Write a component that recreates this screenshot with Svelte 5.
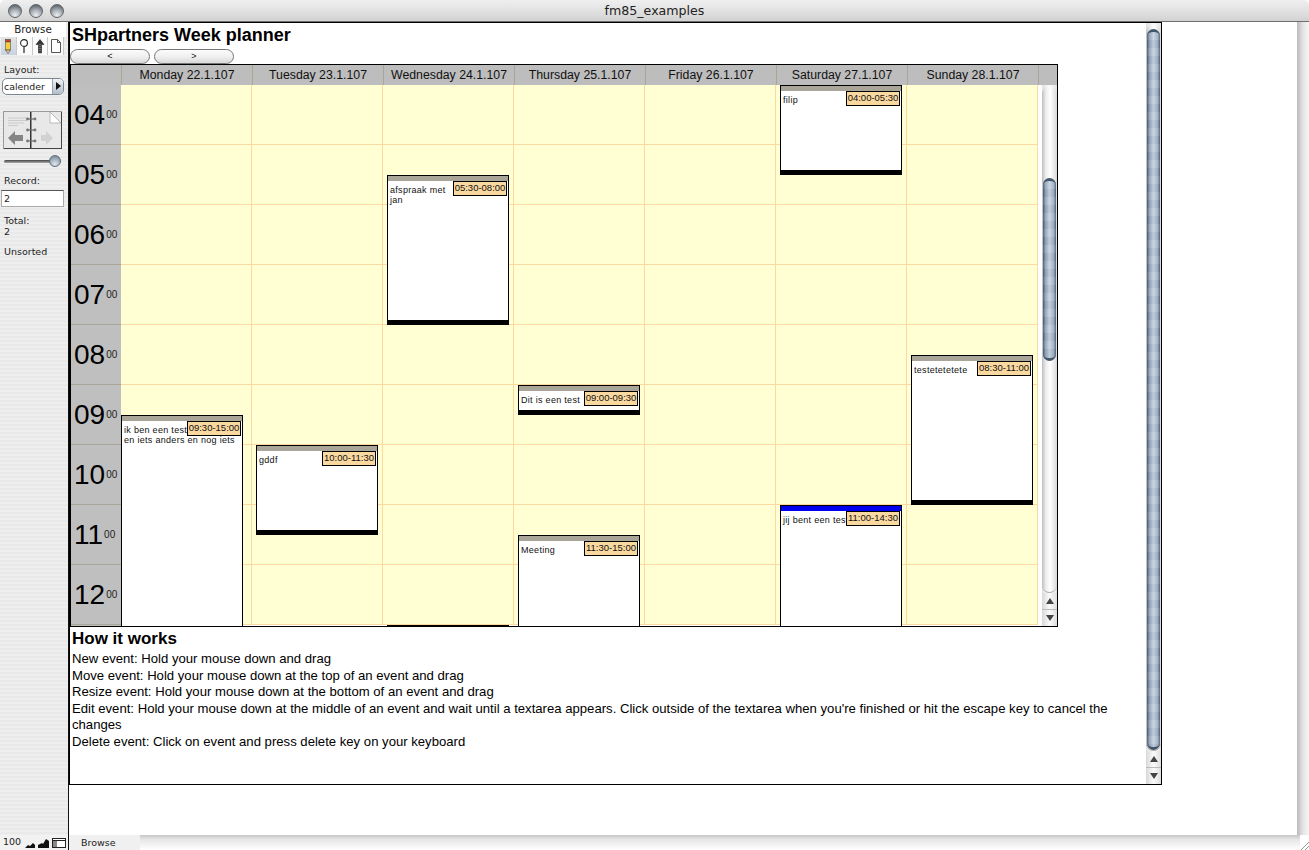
<script>
  const days = [
    "Monday 22.1.107",
    "Tuesday 23.1.107",
    "Wednesday 24.1.107",
    "Thursday 25.1.107",
    "Friday 26.1.107",
    "Saturday 27.1.107",
    "Sunday 28.1.107",
  ];
  const hours = ["04", "05", "06", "07", "08", "09", "10", "11", "12"];

  const hourHeight = 60;
  const dayWidth = 131;

  // day is the column, start and end are in hours
  const events = [
    { day: 0, start: 9.5, end: 15, time: "09:30-15:00", lines: ["ik ben een test", "en iets anders en nog iets"], flush: true },
    { day: 1, start: 10, end: 11.5, time: "10:00-11:30", lines: ["gddf"] },
    { day: 2, start: 5.5, end: 8, time: "05:30-08:00", lines: ["afspraak met", "jan"] },
    { day: 2, start: 13, end: 15, time: "", lines: [], bar: "#000" },
    { day: 3, start: 9, end: 9.5, time: "09:00-09:30", lines: ["Dit is een test"] },
    { day: 3, start: 11.5, end: 15, time: "11:30-15:00", lines: ["Meeting"] },
    { day: 5, start: 4, end: 5.5, time: "04:00-05:30", lines: ["filip"] },
    { day: 5, start: 11, end: 14.5, time: "11:00-14:30", lines: ["jij bent een test"], bar: "#0000f0" },
    { day: 6, start: 8.5, end: 11, time: "08:30-11:00", lines: ["testetetetete"] },
  ];

  const help = [
    "New event: Hold your mouse down and drag",
    "Move event: Hold your mouse down at the top of an event and drag",
    "Resize event: Hold your mouse down at the bottom of an event and drag",
    "Edit event: Hold your mouse down at the middle of an event and wait until a textarea appears. Click outside of the textarea when you're finished or hit the escape key to cancel the changes",
    "Delete event: Click on event and press delete key on your keyboard",
  ];
</script>

{#snippet scrollbar(before, thumb)}
  <div class="scrollbar">
    <div class="track">
      <div class="thumb" style="margin-top: {before}px; height: {thumb}px"></div>
    </div>
    <div class="arrow up"><span></span></div>
    <div class="arrow down"><span></span></div>
  </div>
{/snippet}

<div class="window">
  <header class="titlebar">
    <div class="lights">
      <span></span>
      <span></span>
      <span></span>
    </div>
    <div class="title">fm85_examples</div>
  </header>

  <div class="body">
    <aside class="sidebar">
      <div class="mode">Browse</div>
      <div class="tools">
        <div class="tool active">
          <svg width="8" height="15" viewBox="0 0 8 15">
            <rect x="1.5" y="0.5" width="5" height="2.5" fill="#d8392b" stroke="#444" stroke-width="0.6" />
            <rect x="1.5" y="3" width="5" height="8" fill="#f6cf3c" stroke="#555" stroke-width="0.6" />
            <path d="M1.5 11 L4 14.5 L6.5 11 Z" fill="#e8c9a0" stroke="#444" stroke-width="0.6" />
          </svg>
        </div>
        <div class="tool">
          <svg width="12" height="16" viewBox="0 0 12 16">
            <circle cx="6" cy="5" r="3.4" fill="#fff" stroke="#222" stroke-width="1.1" />
            <path d="M6 9 V15" stroke="#222" stroke-width="1.2" />
          </svg>
        </div>
        <div class="tool">
          <svg width="12" height="16" viewBox="0 0 12 16">
            <path d="M6 1.5 L10 6.5 H7.5 V15 H4.5 V6.5 H2 Z" fill="#333" stroke="#111" stroke-width="0.5" />
            <path d="M6 6 V14.5" stroke="#ddd" stroke-width="0.8" stroke-dasharray="1 1" />
          </svg>
        </div>
        <div class="tool">
          <svg width="12" height="16" viewBox="0 0 12 16">
            <path d="M1.5 1.5 H7.5 L10.5 4.5 V14.5 H1.5 Z M7.5 1.5 V4.5 H10.5" fill="#fff" stroke="#444" stroke-width="0.9" />
          </svg>
        </div>
      </div>

      <div class="label layout-label">Layout:</div>
      <div class="select">
        <span class="select-value">calender</span>
        <span class="select-arrow"></span>
      </div>

      <svg class="book" width="59" height="38" viewBox="0 0 59 38">
        <rect x="0.5" y="0.5" width="58" height="37" fill="#e8e8e8" stroke="#9a9a9a" />
        <path d="M1 37.5 H59 M58.5 1 V38" stroke="#444" />
        <rect x="27" y="1" width="1.5" height="36" fill="#333" />
        <path d="M47 1 L58 12 H47 Z" fill="#fff" stroke="#aaa" stroke-width="0.8" />
        <path d="M5 7 H24 M5 9.5 H24 M5 12 H21 M5 14.5 H15" stroke="#cbcbcb" stroke-width="1" />
        <path d="M5 27 L12 20 V24 H20 V30 H12 V34 Z" fill="#858585" />
        <path d="M50 27 L43 20 V24 H38 V30 H43 V34 Z" fill="#d2d2d2" />
        <g stroke="#6a6a6a" stroke-width="1.2" fill="none">
          <path d="M24.5 8 H32" />
          <path d="M24.5 19 H32" />
          <path d="M24.5 30 H32" />
        </g>
        <g fill="#777">
          <circle cx="24.5" cy="8" r="1.4" />
          <circle cx="32" cy="8" r="1.4" />
          <circle cx="24.5" cy="19" r="1.4" />
          <circle cx="32" cy="19" r="1.4" />
          <circle cx="24.5" cy="30" r="1.4" />
          <circle cx="32" cy="30" r="1.4" />
        </g>
      </svg>

      <div class="slider">
        <span class="slider-knob"></span>
      </div>

      <div class="label record-label">Record:</div>
      <div class="record-input">2</div>
      <div class="label total-label">Total:<br />2</div>
      <div class="label sort-label">Unsorted</div>
    </aside>

    <main class="content">
      <div class="portal">
        <div class="portal-main">
          <h1>SHpartners Week planner</h1>
          <div class="nav">
            <button>&lt;</button>
            <button>&gt;</button>
          </div>

          <div class="calendar">
            <div class="cal-head">
              <div class="corner"></div>
              {#each days as day}
                <div class="day-name">{day}</div>
              {/each}
            </div>
            <div class="cal-body">
              <div class="hours">
                {#each hours as hour}
                  <div class="hour"><span class="h">{hour}</span><span class="m">00</span></div>
                {/each}
              </div>
              <div class="grid-wrap">
                <div class="grid">
                  {#each hours as hour}
                    {#each days as day}
                      <div class="cell"></div>
                    {/each}
                  {/each}
                </div>
                {#each events as e}
                  <div
                    class="event"
                    style="left: {e.day * dayWidth + (e.flush ? 0 : 4)}px; top: {(e.start - 4) * hourHeight}px; height: {(e.end - e.start) * hourHeight}px; --bar: {e.bar ?? '#a9a598'}"
                  >
                    <div class="event-text">
                      {#each e.lines as line}
                        <div>{line}</div>
                      {/each}
                    </div>
                    {#if e.time}
                      <div class="badge">{e.time}</div>
                    {/if}
                  </div>
                {/each}
              </div>
              {@render scrollbar(91, 183)}
            </div>
          </div>

          <section class="howto">
            <h2>How it works</h2>
            {#each help as line}
              <p>{line}</p>
            {/each}
          </section>
        </div>
        {@render scrollbar(4, 721)}
      </div>
    </main>
  </div>

  <footer class="statusbar">
    <div class="zoom">
      <span class="zoom-value">100</span>
      <svg width="10" height="6" viewBox="0 0 10 6"><path d="M0 6 L3 3 L5 4 L8 1 L10 3 V6 Z" fill="#111" /></svg>
      <svg width="11" height="9" viewBox="0 0 11 9"><path d="M0 9 V6 L4 4 L5 5 L8 0 L11 2 V9 Z" fill="#111" /></svg>
      <svg width="14" height="10" viewBox="0 0 14 10">
        <rect x="0.5" y="0.5" width="13" height="9" fill="#fff" stroke="#222" />
        <rect x="1" y="3" width="4" height="6" fill="#888" />
        <path d="M1 2.5 H13" stroke="#222" />
      </svg>
    </div>
    <div class="mode-tab">Browse</div>
    <div class="grip">
      <svg width="9" height="9" viewBox="0 0 9 9"><path d="M1 9 L9 1 M5 9 L9 5" stroke="#999" stroke-width="1" /></svg>
    </div>
  </footer>
</div>

<style>
  :global(body) {
    margin: 0;
    background: #fff;
  }
  .window {
    width: 1309px;
    height: 850px;
    display: flex;
    flex-direction: column;
    overflow: hidden;
    font-family: "Liberation Sans", Arial, sans-serif;
    color: #000;
  }

  .titlebar {
    height: 21px;
    flex-shrink: 0;
    position: relative;
    display: flex;
    align-items: center;
    justify-content: center;
    background: linear-gradient(180deg, #efefef 0%, #e2e2e2 50%, #d2d2d2 100%);
    border-bottom: 1px solid #6f6f6f;
    border-radius: 5px 5px 0 0;
  }
  .title {
    font-family: "DejaVu Sans", sans-serif;
    font-size: 12.6px;
    color: #222;
  }
  .lights {
    position: absolute;
    left: 8px;
    top: 4px;
    display: flex;
    gap: 7px;
  }
  .lights span {
    width: 14px;
    height: 14px;
    border-radius: 50%;
    box-sizing: border-box;
    border: 1px solid #5f656b;
    background: radial-gradient(circle at 50% 85%, #eef1f4 0%, #a9afb5 45%, #5f666d 85%);
  }

  .body {
    flex: 1;
    min-height: 0;
    display: flex;
  }

  .sidebar {
    width: 69px;
    flex-shrink: 0;
    box-sizing: border-box;
    border-right: 1px solid #111;
    display: flex;
    flex-direction: column;
    background: repeating-linear-gradient(180deg, #eeeeee 0, #eeeeee 2px, #e9e9e9 2px, #e9e9e9 4px);
    font-family: "DejaVu Sans", sans-serif;
    font-size: 9.5px;
    color: #222;
  }
  .mode {
    height: 15px;
    line-height: 14px;
    font-size: 10.3px;
    text-align: center;
    background: #fff;
    margin-right: 2px;
  }
  .tools {
    height: 18px;
    margin: 0 4px 0 1px;
    display: grid;
    grid-template-columns: repeat(4, 1fr);
    background: #fafafa;
  }
  .tool {
    display: flex;
    align-items: center;
    justify-content: center;
    border-right: 1px solid #c8c8c8;
  }
  .tool.active {
    background: linear-gradient(180deg, #e4e4e4, #c9d3e0);
  }
  .label {
    padding-left: 4px;
    line-height: 11px;
  }
  .layout-label {
    margin-top: 9px;
  }
  .select {
    margin: 3px 4px 0 2px;
    height: 17px;
    box-sizing: border-box;
    border: 1px solid #7d8793;
    border-radius: 5px;
    display: flex;
    background: #fff;
    overflow: hidden;
  }
  .select-value {
    flex: 1;
    padding-left: 1px;
    line-height: 15px;
    font-size: 9.4px;
  }
  .select-arrow {
    width: 10px;
    border-left: 1px solid #9aa5b3;
    background: linear-gradient(180deg, #f1f3f6, #b3bdca);
    position: relative;
  }
  .select-arrow::after {
    content: "";
    position: absolute;
    left: 3px;
    top: 3px;
    border-left: 5px solid #111;
    border-top: 4px solid transparent;
    border-bottom: 4px solid transparent;
  }
  .book {
    margin: 16px 0 0 3px;
  }
  .slider {
    margin: 6px 0 0 4px;
    width: 57px;
    height: 12px;
    position: relative;
    display: flex;
    align-items: center;
  }
  .slider::before {
    content: "";
    flex: 1;
    height: 3px;
    border-radius: 2px;
    background: linear-gradient(180deg, #444, #aaa);
  }
  .slider-knob {
    position: absolute;
    right: 0;
    top: 0;
    width: 12px;
    height: 12px;
    box-sizing: border-box;
    border-radius: 50%;
    border: 1px solid #626d78;
    background: radial-gradient(circle at 50% 80%, #dfe6ee 0%, #9fadbb 55%, #6f7d8b 100%);
  }
  .record-label {
    margin-top: 8px;
  }
  .record-input {
    margin: 4px 4px 0 1px;
    height: 17px;
    box-sizing: border-box;
    background: #fff;
    border: 1px solid #aaa;
    border-top-color: #555;
    padding-left: 2px;
    line-height: 15px;
  }
  .total-label {
    margin-top: 8px;
  }
  .sort-label {
    margin-top: 9px;
  }

  .content {
    flex: 1;
    min-width: 0;
    background: #fff;
    position: relative;
  }
  .content::after {
    content: "";
    position: absolute;
    right: 0;
    top: 0;
    bottom: 0;
    width: 12px;
    background: linear-gradient(90deg, #b9b9b9 0%, #e4e4e4 50%, #f5f5f5 100%);
  }

  .portal {
    width: 1093px;
    height: 763px;
    box-sizing: border-box;
    border: 1px solid #000;
    display: flex;
    background: #fff;
  }
  .portal-main {
    flex: 1;
    min-width: 0;
  }
  h1 {
    margin: 0 0 0 2px;
    font-size: 18px;
    line-height: 25px;
    font-weight: bold;
    height: 26px;
  }
  .nav {
    display: flex;
    gap: 4px;
    height: 15px;
  }
  button {
    width: 80px;
    height: 15px;
    padding: 0;
    margin: 0;
    border: 1px solid #777;
    border-radius: 8px;
    background: linear-gradient(180deg, #fbfbfb 0%, #f0f0f0 50%, #d9d9d9 100%);
    font-family: "Liberation Sans", Arial, sans-serif;
    font-size: 9px;
    line-height: 13px;
    color: #111;
  }

  .calendar {
    width: 988px;
    box-sizing: border-box;
    border: 1px solid #000;
  }
  .cal-head {
    display: grid;
    grid-template-columns: 51px repeat(7, 131px) 1fr;
    height: 20px;
    background: #bdbdbd;
  }
  .corner {
    grid-column: 1;
    border-right: 1px solid #a9a598;
  }
  .day-name {
    border-right: 1px solid #a9a598;
    text-align: center;
    font-size: 12.3px;
    line-height: 20px;
    color: #111;
  }
  .cal-body {
    display: flex;
    height: 541px;
    background: #fff;
  }
  .hours {
    width: 50px;
    flex-shrink: 0;
    background: #bfbfbf;
    overflow: hidden;
  }
  .hour {
    height: 60px;
    box-sizing: border-box;
    border-bottom: 1px solid #a9a598;
    display: flex;
    align-items: center;
    padding-left: 3px;
  }
  .h {
    font-size: 28px;
  }
  .m {
    font-size: 10px;
    margin: 0 0 1px 1px;
    color: #222;
  }
  .grid-wrap {
    width: 917px;
    flex-shrink: 0;
    margin-right: 4px;
    position: relative;
    overflow: hidden;
  }
  .grid {
    display: grid;
    grid-template-columns: repeat(7, 131px);
    grid-auto-rows: 60px;
    background: #ffffd3;
  }
  .cell {
    border-right: 1px solid #fbd9a0;
    border-bottom: 1px solid #fbd9a0;
  }
  .event {
    position: absolute;
    width: 122px;
    box-sizing: border-box;
    background: #fff;
    border: 1px solid #000;
    border-bottom: 5px solid #000;
  }
  .event::before {
    content: "";
    display: block;
    height: 5px;
    background: var(--bar);
  }
  .event-text {
    padding: 4px 2px 0;
    font-size: 9px;
    line-height: 10px;
    letter-spacing: 0.3px;
    white-space: nowrap;
    color: #111;
  }
  .badge {
    position: absolute;
    right: 1px;
    top: 5px;
    width: 54px;
    height: 15px;
    box-sizing: border-box;
    background: #fad9a0;
    border: 1px solid #000;
    font-size: 9.5px;
    line-height: 12px;
    text-align: center;
    color: #111;
  }

  .scrollbar {
    width: 15px;
    flex-shrink: 0;
    display: flex;
    flex-direction: column;
    background: linear-gradient(90deg, #e0e0e0, #fbfbfb 50%, #e4e4e4);
  }
  .track {
    flex: 1;
    min-height: 0;
    margin-top: 2px;
    border-radius: 7px 7px 8px 8px;
    border-bottom: 1px solid #aaa;
    background: linear-gradient(90deg, #bdbdbd 0%, #ececec 25%, #ffffff 55%, #d9d9d9 100%);
  }
  .thumb {
    box-sizing: border-box;
    margin: 0 1px;
    border-radius: 7px;
    background:
      repeating-linear-gradient(180deg, rgba(255, 255, 255, 0.07) 0, rgba(255, 255, 255, 0.07) 8px, rgba(60, 80, 110, 0.05) 8px, rgba(60, 80, 110, 0.05) 16px),
      linear-gradient(90deg, #44546a 0%, #8fa1b6 18%, #c6d2e0 50%, #9fb0c4 82%, #4e5e74 100%);
    border-top: 3px solid #44566c;
    border-bottom: 3px solid #44566c;
  }
  .arrow {
    height: 16px;
    flex-shrink: 0;
    display: flex;
    align-items: center;
    justify-content: center;
    background: linear-gradient(90deg, #d8d8d8, #fafafa 50%, #dedede);
  }
  .arrow.up {
    border-bottom: 1px solid #bbb;
  }
  .arrow span {
    border-left: 4px solid transparent;
    border-right: 4px solid transparent;
  }
  .arrow.up span {
    border-bottom: 6px solid #444;
  }
  .arrow.down span {
    border-top: 6px solid #444;
  }

  .howto {
    padding: 2px 2px 0;
    width: 1045px;
  }
  h2 {
    margin: 0;
    font-size: 17px;
    line-height: 20px;
    height: 22px;
  }
  p {
    margin: 0;
    font-size: 13.14px;
    line-height: 16.5px;
  }

  .statusbar {
    height: 15px;
    flex-shrink: 0;
    display: flex;
    background: linear-gradient(180deg, #c6c6c6 0%, #e6e6e6 30%, #f4f4f4 70%, #ffffff 100%);
    font-family: "DejaVu Sans", sans-serif;
    font-size: 9.5px;
    line-height: 15px;
    color: #222;
  }
  .zoom {
    width: 69px;
    display: flex;
    align-items: flex-end;
    gap: 3px;
    padding: 0 0 2px 3px;
    background: #f2f2f2;
    border-right: 1px solid #111;
    box-sizing: border-box;
  }
  .zoom-value {
    width: 19px;
    font-size: 9.5px;
    line-height: 13px;
  }
  .mode-tab {
    width: 71px;
    box-sizing: border-box;
    padding-left: 12px;
    background: #f0f0f0;
  }
  .grip {
    margin-left: auto;
    width: 9px;
    background: #fff;
    display: flex;
    align-items: flex-end;
  }
</style>
